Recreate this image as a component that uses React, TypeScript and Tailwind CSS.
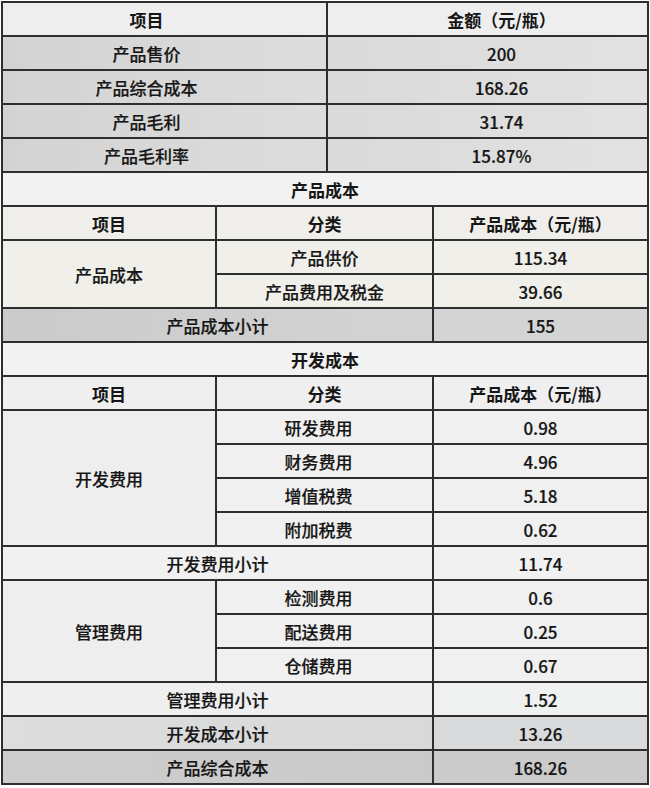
import type { ReactNode } from "react";

type CellProps = {
  className?: string;
  bold?: boolean;
  children?: ReactNode;
};

function Cell({ className = "", bold = false, children }: CellProps) {
  return (
    <div
      className={`flex items-center justify-center text-[17px] leading-none text-[#161616] ${
        bold ? "font-bold" : "font-medium [-webkit-text-stroke:0.2px_#161616]"
      } ${className}`}
    >
      {children}
    </div>
  );
}

const devRows = [
  ["研发费用", "0.98"],
  ["财务费用", "4.96"],
  ["增值税费", "5.18"],
  ["附加税费", "0.62"],
];

const mgmtRows = [
  ["检测费用", "0.6"],
  ["配送费用", "0.25"],
  ["仓储费用", "0.67"],
];

const summary = [
  ["产品售价", "200"],
  ["产品综合成本", "168.26"],
  ["产品毛利", "31.74"],
  ["产品毛利率", "15.87%"],
];

export default function App() {
  return (
    <div
      className="min-h-screen bg-white pt-px pl-px"
      style={{ fontFamily: '"Noto Sans CJK SC", "Noto Sans", sans-serif' }}
    >
      <div className="grid w-[648px] grid-cols-[212px_109px_104px_213px] auto-rows-[32px] gap-[2px] bg-[#2e2e2e] p-[2px]">
        {/* summary table */}
        <Cell bold className="col-span-2 bg-[#eeeeee] pr-[36px]">项目</Cell>
        <Cell bold className="col-span-2 bg-[#eeeeee] pl-[28px]">金额（元/瓶）</Cell>
        {summary.map(([k, v]) => (
          <div key={k} className="contents">
            <Cell className="col-span-2 bg-gradient-to-r from-[#d3d3d3] to-[#dddddd] pr-[36px]">{k}</Cell>
            <Cell className="col-span-2 bg-gradient-to-r from-[#dadada] to-[#e2e2e2] pl-[28px]">{v}</Cell>
          </div>
        ))}

        {/* 产品成本 */}
        <Cell bold className="col-span-4 bg-[#f2f2f2]">产品成本</Cell>
        <Cell bold className="bg-[#efeeea]">项目</Cell>
        <Cell bold className="col-span-2 bg-[#efeeea]">分类</Cell>
        <Cell bold className="bg-[#efeeea]">产品成本（元/瓶）</Cell>
        <Cell className="row-span-2 bg-[#f0efea]">产品成本</Cell>
        <Cell className="col-span-2 bg-[#f0efea]">产品供价</Cell>
        <Cell className="bg-[#f0efea]">115.34</Cell>
        <Cell className="col-span-2 bg-[#f0efea]">产品费用及税金</Cell>
        <Cell className="bg-[#f0efea]">39.66</Cell>
        <Cell className="col-span-3 bg-gradient-to-r from-[#cbcbcb] to-[#d3d3d3]">产品成本小计</Cell>
        <Cell className="bg-[#d4d4d4]">155</Cell>

        {/* 开发成本 */}
        <Cell bold className="col-span-4 bg-[#f2f2f2]">开发成本</Cell>
        <Cell bold className="bg-[#efefef]">项目</Cell>
        <Cell bold className="col-span-2 bg-[#efefef]">分类</Cell>
        <Cell bold className="bg-[#efefef]">产品成本（元/瓶）</Cell>
        <Cell className="row-span-4 bg-[#eeeeee]">开发费用</Cell>
        {devRows.map(([k, v]) => (
          <div key={k} className="contents">
            <Cell className="col-span-2 bg-[#f0f0f0] pr-[12px]">{k}</Cell>
            <Cell className="bg-[#f0f0f0]">{v}</Cell>
          </div>
        ))}
        <Cell className="col-span-3 bg-[#f1f1f1]">开发费用小计</Cell>
        <Cell className="bg-[#f1f1f1]">11.74</Cell>
        <Cell className="row-span-3 bg-[#eeeeee]">管理费用</Cell>
        {mgmtRows.map(([k, v]) => (
          <div key={k} className="contents">
            <Cell className="col-span-2 bg-[#f0f0f0] pr-[12px]">{k}</Cell>
            <Cell className="bg-[#f0f0f0]">{v}</Cell>
          </div>
        ))}
        <Cell className="col-span-3 bg-[#efeff0]">管理费用小计</Cell>
        <Cell className="bg-[#eff0f0]">1.52</Cell>
        <Cell className="col-span-3 bg-gradient-to-r from-[#dddddd] to-[#d8d9da]">开发成本小计</Cell>
        <Cell className="bg-[#d9dadb]">13.26</Cell>
        <Cell className="col-span-3 bg-gradient-to-r from-[#cdcdcd] to-[#cacaca]">产品综合成本</Cell>
        <Cell className="bg-[#cbcbcb]">168.26</Cell>
      </div>
    </div>
  );
}
